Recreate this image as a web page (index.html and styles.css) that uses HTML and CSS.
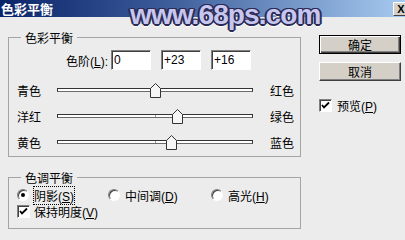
FILE: index.html
```html
<!DOCTYPE html>
<html lang="zh-CN">
<head>
  <meta charset="UTF-8">
  <title>色彩平衡</title>
  <link rel="stylesheet" href="styles.css">
</head>
<body>
  <div class="titlebar">
    <span class="title">色彩平衡</span>
    <span class="close">X</span>
  </div>
  <div class="watermark">www.68ps.com</div>

  <div class="dialog">
    <div class="main">
      <fieldset class="group balance">
        <legend>色彩平衡</legend>
        <div class="levels">
          <span class="levels-label">色阶(<u>L</u>):</span>
          <input class="field" type="text" value="0">
          <input class="field" type="text" value="+23">
          <input class="field" type="text" value="+16">
        </div>
        <div class="sliders">
          <div class="slider-row">
            <span class="from">青色</span>
            <div class="track"><span class="tick"></span><span class="thumb" style="left: 50%"><svg width="11" height="15" viewBox="0 0 11 15"><polygon points="0.5,5.5 5.5,0.5 10.5,5.5 10.5,14.5 0.5,14.5" fill="#f6f6f6" stroke="#333"/></svg></span></div>
            <span class="to">红色</span>
          </div>
          <div class="slider-row">
            <span class="from">洋红</span>
            <div class="track"><span class="tick"></span><span class="thumb" style="left: 61.5%"><svg width="11" height="15" viewBox="0 0 11 15"><polygon points="0.5,5.5 5.5,0.5 10.5,5.5 10.5,14.5 0.5,14.5" fill="#f6f6f6" stroke="#333"/></svg></span></div>
            <span class="to">绿色</span>
          </div>
          <div class="slider-row">
            <span class="from">黄色</span>
            <div class="track"><span class="tick"></span><span class="thumb" style="left: 58%"><svg width="11" height="15" viewBox="0 0 11 15"><polygon points="0.5,5.5 5.5,0.5 10.5,5.5 10.5,14.5 0.5,14.5" fill="#f6f6f6" stroke="#333"/></svg></span></div>
            <span class="to">蓝色</span>
          </div>
        </div>
      </fieldset>

      <fieldset class="group tone">
        <legend>色调平衡</legend>
        <div class="radios">
          <label class="option first"><span class="radio checked"></span><span class="focus">阴影(<u>S</u>)</span></label>
          <label class="option second"><span class="radio"></span><span>中间调(<u>D</u>)</span></label>
          <label class="option"><span class="radio"></span><span>高光(<u>H</u>)</span></label>
        </div>
        <label class="check-row">
          <span class="checkbox"><svg width="11" height="11" viewBox="0 0 11 11"><path d="M2 5 L4 7.5 L9 2.5" fill="none" stroke="#000" stroke-width="1.8"/></svg></span>
          <span>保持明度(<u>V</u>)</span>
        </label>
      </fieldset>
    </div>

    <div class="side">
      <button class="btn default">确定</button>
      <button class="btn">取消</button>
      <label class="check-row preview">
        <span class="checkbox"><svg width="11" height="11" viewBox="0 0 11 11"><path d="M2 5 L4 7.5 L9 2.5" fill="none" stroke="#000" stroke-width="1.8"/></svg></span>
        <span>预览(<u>P</u>)</span>
      </label>
    </div>
  </div>
</body>
</html>
```

FILE: styles.css
```css
body {
  margin: 0;
  width: 405px;
  height: 240px;
  overflow: hidden;
  position: relative;
  background-color: #ececec;
  font-family: "Liberation Sans", "Noto Sans CJK SC", sans-serif;
  font-size: 12px;
  color: #000;
}
.titlebar {
  height: 17px;
  display: flex;
  align-items: center;
  justify-content: space-between;
  background: linear-gradient(to right, #0a246a, #3a5a98 40%, #a6caf0);
}
.title {
  color: #fff;
  font-family: "Noto Sans CJK SC", sans-serif;
  font-weight: bold;
  font-size: 13px;
  line-height: 17px;
  padding-left: 1px;
}
.close {
  width: 16px;
  height: 14px;
  margin-right: -4px;
  box-sizing: border-box;
  background: #d4d0c8;
  border: 1px solid;
  border-color: #fff #404040 #404040 #fff;
  font: bold 11px/12px "Liberation Sans", sans-serif;
  text-align: center;
}
.watermark {
  position: absolute;
  left: 130px;
  top: -1px;
  font-family: "Liberation Sans", sans-serif;
  font-weight: bold;
  font-size: 28px;
  letter-spacing: -0.9px;
  color: #c6c6ee;
  text-shadow:
    1px 0 #2b2b55, -1px 0 #2b2b55, 0 1px #2b2b55, 0 -1px #2b2b55,
    1px 1px #2b2b55, -1px -1px #2b2b55, 1px -1px #2b2b55, -1px 1px #2b2b55,
    2px 0 #2b2b55, -2px 0 #2b2b55, 0 2px #2b2b55,
    0 3px 1px #fff;
}
.dialog {
  display: flex;
  gap: 18px;
  padding: 13px 0 0 8px;
}
.main {
  width: 293px;
}
.group {
  margin: 0;
  padding: 0 0 1px 0;
  border: 1px solid #a4a4a4;
  min-width: 0;
}
.group legend {
  margin-left: 12px;
  padding: 0 4px;
  line-height: 15px;
  font-family: "Noto Sans CJK SC", sans-serif;
}
.levels {
  display: flex;
  align-items: center;
  height: 20px;
  margin-top: 5px;
}
.levels-label {
  width: 99px;
  margin-right: 3px;
  text-align: right;
}
.field {
  width: 40px;
  height: 20px;
  margin: 0 10px 0 0;
  padding: 0 2px;
  box-sizing: border-box;
  border: 1px solid;
  border-color: #808080 #fff #fff #808080;
  box-shadow: inset 1px 1px #404040;
  background: #fff;
  font: 12px "Liberation Sans", sans-serif;
}
.sliders {
  padding-top: 7px;
}
.slider-row {
  display: flex;
  align-items: center;
  height: 26px;
  padding-left: 8px;
}
.from {
  width: 40px;
}
.to {
  margin-left: 17px;
}
.track {
  position: relative;
  width: 194px;
  height: 2px;
  background: #fff;
  border: 1px solid #333;
  border-bottom-color: #6a6a6a;
}
.tick {
  position: absolute;
  left: 50%;
  top: 0;
  width: 1px;
  height: 2px;
  background: #999;
}
.thumb {
  position: absolute;
  top: -6px;
  margin-left: -5px;
  width: 11px;
  height: 15px;
}
.thumb svg {
  display: block;
}
.tone {
  margin-top: 13px;
  padding-bottom: 9px;
}
.radios {
  display: flex;
  align-items: center;
  height: 16px;
  margin-top: 2px;
  padding-left: 8px;
}
.option {
  display: flex;
  align-items: center;
  gap: 5px;
}
.option.first {
  width: 91px;
}
.option.second {
  width: 103px;
}
.radio {
  position: relative;
  width: 12px;
  height: 12px;
  box-sizing: border-box;
  border-radius: 50%;
  border: 1px solid;
  border-color: #808080 #fff #fff #808080;
  box-shadow: inset 1px 1px #404040;
  background: #fff;
}
.radio.checked::after {
  content: "";
  position: absolute;
  left: 3px;
  top: 3px;
  width: 4px;
  height: 4px;
  border-radius: 50%;
  background: #000;
}
.focus {
  outline: 1px dotted #000;
}
.check-row {
  display: flex;
  align-items: center;
  gap: 4px;
  height: 16px;
  padding-left: 8px;
}
.checkbox {
  width: 13px;
  height: 13px;
  box-sizing: border-box;
  border: 1px solid;
  border-color: #808080 #fff #fff #808080;
  box-shadow: inset 1px 1px #404040;
  background: #fff;
  display: flex;
  align-items: center;
  justify-content: center;
}
.checkbox svg {
  display: block;
}
.side {
  display: flex;
  flex-direction: column;
  width: 82px;
  padding-top: 5px;
}
.btn {
  height: 19px;
  padding: 0;
  box-sizing: border-box;
  background: #d4d0c8;
  border: 1px solid;
  border-color: #fff #404040 #404040 #fff;
  box-shadow: inset -1px -1px #808080;
  font: 12px "Noto Sans CJK SC", sans-serif;
  color: #000;
}
.btn.default {
  border-color: #000;
  box-shadow: inset 1px 1px #fff, inset -1px -1px #404040, inset -2px -2px #808080;
}
.btn + .btn {
  margin-top: 8px;
}
.preview {
  margin-top: 16px;
  padding-left: 0;
  gap: 5px;
}
```
